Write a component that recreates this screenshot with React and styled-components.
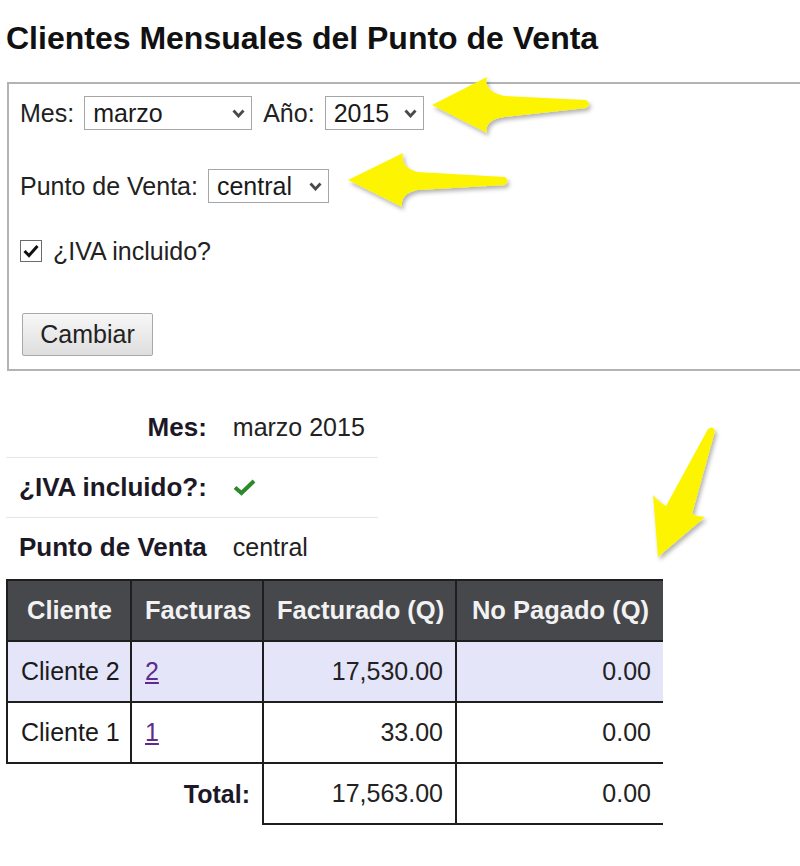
import React, { useState } from 'react';
import styled, { createGlobalStyle } from 'styled-components';

const GlobalStyle = createGlobalStyle`
    body {
        margin: 0;
        background: #fff;
        font-family: "Liberation Sans", Arial, sans-serif;
        color: #1a1a1a;
        overflow: hidden;
    }
`;

const Page = styled.div`
    position: relative;
    width: 800px;
    height: 866px;
    padding: 20px 6px 0;
    box-sizing: border-box;
    overflow: hidden;
`;

const Title = styled.h1`
    margin: 0 0 26px;
    font-size: 32px;
    line-height: 36px;
    font-weight: bold;
    color: #111;
`;

const FilterBox = styled.form`
    width: 820px;
    margin: 0 0 0 1px;
    padding: 12px 11px 13px;
    border: 2px solid #b3b3b3;
    box-sizing: border-box;
    font-size: 25px;
    color: #222;
`;

const Row = styled.div`
    display: flex;
    align-items: center;
    height: 34px;
    margin-top: ${p => p.$mt || 0}px;
    gap: 10px;
`;

const SelectWrap = styled.span`
    position: relative;
    display: inline-block;
    width: ${p => p.$w}px;
    height: 34px;
    margin-right: 1px;

    svg {
        position: absolute;
        right: 7px;
        top: 13px;
        pointer-events: none;
    }
`;

const Select = styled.select`
    appearance: none;
    width: 100%;
    height: 100%;
    margin: 0;
    padding: 0 0 0 8px;
    border: 1px solid #a6a6a6;
    border-radius: 0;
    background: #fff;
    font-family: inherit;
    font-size: 25px;
    color: #1a1a1a;
    box-sizing: border-box;
`;

const CheckLabel = styled.label`
    display: flex;
    align-items: center;
    gap: 11px;
`;

const CheckBox = styled.span`
    display: inline-flex;
    align-items: center;
    justify-content: center;
    width: 22px;
    height: 22px;
    border: 1px solid #6b6b6b;
    background: #fff;
    box-sizing: border-box;
`;

const Button = styled.button`
    margin: ${p => p.$mt}px 0 0 2px;
    width: 131px;
    height: 43px;
    border: 1px solid #a8a8a8;
    border-radius: 2px;
    background: linear-gradient(#f7f7f7, #dedede);
    font-family: inherit;
    font-size: 25px;
    color: #222;
    padding: 0;
`;

const Summary = styled.table`
    margin-top: 27px;
    border-collapse: collapse;
    font-size: 25px;
    line-height: 29px;

    th, td {
        padding: 15px 13px;
        white-space: nowrap;
    }
    th {
        text-align: right;
        font-size: 26px;
        font-weight: bold;
        color: #1c1826;
    }
    td {
        text-align: left;
        color: #222;
    }
    tr + tr {
        border-top: 1px solid #e6e6e6;
    }
`;

const Report = styled.table`
    margin-top: 2px;
    border-collapse: collapse;
    table-layout: fixed;
    width: 656px;
    font-size: 25px;
    line-height: 29px;

    th, td {
        padding: 15px 12px 15px 13px;
        border: 2px solid #1e1e1e;
        white-space: nowrap;
    }
    th:last-child, td:last-child {
        border-right: none;
    }
    thead th {
        background: #46484c;
        color: #f2f2f2;
        font-size: 25.5px;
        font-weight: bold;
        text-align: center;
    }
    tfoot th {
        border: none;
        text-align: right;
        color: #1c1826;
    }
`;

const BodyRow = styled.tr`
    background: ${p => (p.$alt ? '#e5e5fa' : '#fff')};
`;

const Num = styled.td`
    text-align: right;
    color: #222;
`;

const Link = styled.a`
    color: #5b2c8c;
    text-decoration: underline;
`;

const Chevron = () => (
    <svg width="13" height="9" viewBox="0 0 13 9">
        <path d="M1.5 1.5 L6.5 7 L11.5 1.5" fill="none" stroke="#4a4a4a" strokeWidth="2.8" />
    </svg>
);

const Arrows = styled.svg`
    position: absolute;
    left: 0;
    top: 0;
    pointer-events: none;
`;

const months = ['enero', 'febrero', 'marzo', 'abril', 'mayo', 'junio', 'julio', 'agosto', 'septiembre', 'octubre', 'noviembre', 'diciembre'];

const rows = [
    { name: 'Cliente 2', bills: 2, billed: '17,530.00', unpaid: '0.00' },
    { name: 'Cliente 1', bills: 1, billed: '33.00', unpaid: '0.00' },
];

const App = () => {
    const [month, setMonth] = useState('marzo');
    const [year, setYear] = useState('2015');
    const [store, setStore] = useState('central');
    const [withTax, setWithTax] = useState(true);

    return (
        <Page>
            <GlobalStyle />
            <Title>Clientes Mensuales del Punto de Venta</Title>

            <FilterBox onSubmit={e => e.preventDefault()}>
                <Row>
                    <span>Mes:</span>
                    <SelectWrap $w={168}>
                        <Select value={month} onChange={e => setMonth(e.target.value)}>
                            {months.map(m => <option key={m}>{m}</option>)}
                        </Select>
                        <Chevron />
                    </SelectWrap>
                    <span>Año:</span>
                    <SelectWrap $w={99}>
                        <Select value={year} onChange={e => setYear(e.target.value)}>
                            <option>2014</option>
                            <option>2015</option>
                        </Select>
                        <Chevron />
                    </SelectWrap>
                </Row>

                <Row $mt={39}>
                    <span>Punto de Venta:</span>
                    <SelectWrap $w={121}>
                        <Select value={store} onChange={e => setStore(e.target.value)}>
                            <option>central</option>
                        </Select>
                        <Chevron />
                    </SelectWrap>
                </Row>

                <Row $mt={31}>
                    <CheckLabel onClick={() => setWithTax(!withTax)}>
                        <CheckBox>
                            {withTax && (
                                <svg width="16" height="14" viewBox="0 0 16 14">
                                    <path d="M1.5 7 L6 11.5 L14.5 2" fill="none" stroke="#111" strokeWidth="3" />
                                </svg>
                            )}
                        </CheckBox>
                        ¿IVA incluido?
                    </CheckLabel>
                </Row>

                <Button type="submit" $mt={45}>Cambiar</Button>
            </FilterBox>

            <Summary>
                <tbody>
                    <tr>
                        <th>Mes:</th>
                        <td>marzo 2015</td>
                    </tr>
                    <tr>
                        <th>¿IVA incluido?:</th>
                        <td>
                            <svg width="23" height="18" viewBox="0 0 23 18">
                                <path d="M2 9.5 L8.5 15 L21 3" fill="none" stroke="#2b8a2b" strokeWidth="4" />
                            </svg>
                        </td>
                    </tr>
                    <tr>
                        <th>Punto de Venta</th>
                        <td>central</td>
                    </tr>
                </tbody>
            </Summary>

            <Report>
                <colgroup>
                    <col style={{ width: 124 }} />
                    <col style={{ width: 132 }} />
                    <col style={{ width: 193 }} />
                    <col style={{ width: 207 }} />
                </colgroup>
                <thead>
                    <tr>
                        <th>Cliente</th>
                        <th>Facturas</th>
                        <th>Facturado (Q)</th>
                        <th>No Pagado (Q)</th>
                    </tr>
                </thead>
                <tbody>
                    {rows.map((r, i) => (
                        <BodyRow key={r.name} $alt={i % 2 === 0}>
                            <td>{r.name}</td>
                            <td><Link href="#">{r.bills}</Link></td>
                            <Num>{r.billed}</Num>
                            <Num>{r.unpaid}</Num>
                        </BodyRow>
                    ))}
                </tbody>
                <tfoot>
                    <tr>
                        <th colSpan={2}>Total:</th>
                        <Num>17,563.00</Num>
                        <Num>0.00</Num>
                    </tr>
                </tfoot>
            </Report>

            {/* callout arrows */}
            <Arrows width="800" height="866" viewBox="0 0 800 866">
                <defs>
                    <filter id="arrowShadow" x="-10%" y="-10%" width="130%" height="140%">
                        <feDropShadow dx="2" dy="3" stdDeviation="2" floodColor="#000" floodOpacity="0.3" />
                    </filter>
                </defs>
                <g fill="#fcf400" filter="url(#arrowShadow)">
                    <path d="M432 105 L487 77 Q483 91 504 96 L586 100 Q592 104 586 108 L504 117 Q484 120 487 133 Z" />
                    <path d="M348 180 L403 153 Q400 167 417 172 L505 177 Q510 181 505 185 L417 190 Q400 194 402 207 Z" />
                    <path d="M658 557 L653 495 Q660 503 666 506 L708 429 Q713 425 715 431 L692 514 Q698 517 705 517 Z" />
                </g>
            </Arrows>
        </Page>
    );
};

export default App;
